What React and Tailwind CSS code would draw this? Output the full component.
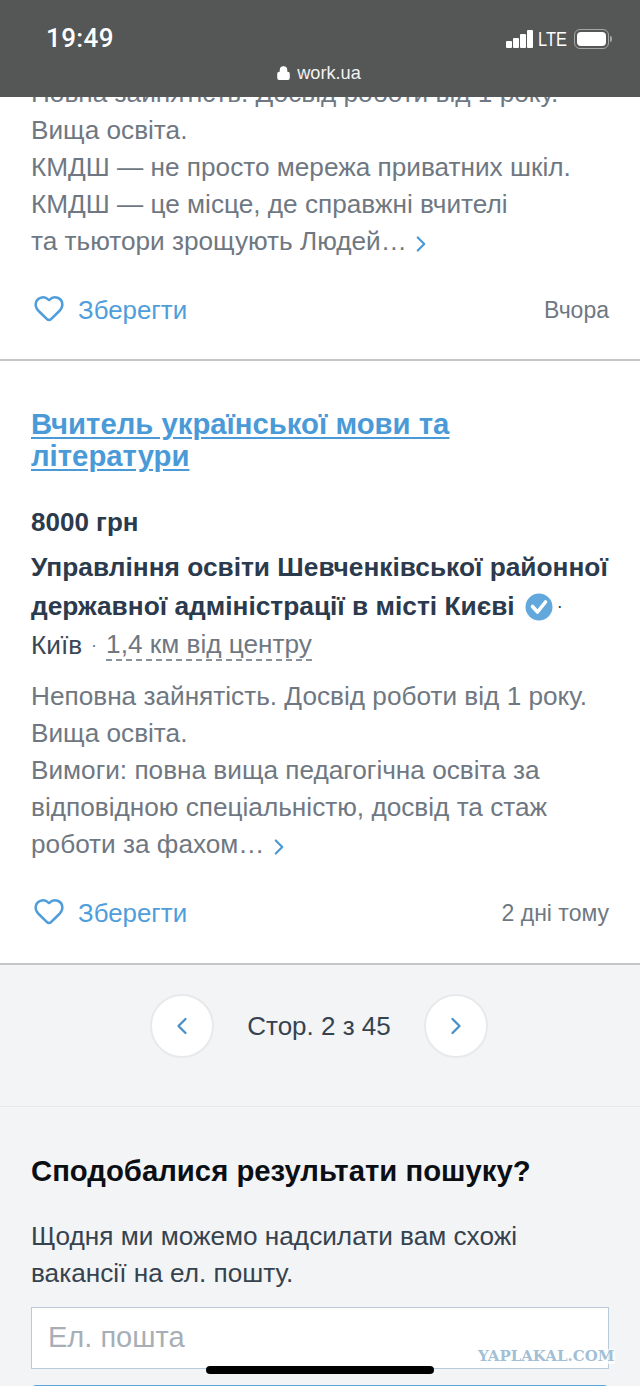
import { Lock, Heart, ChevronLeft, ChevronRight } from 'lucide-react';

const FONT = "font-['Liberation_Sans',Arial,sans-serif]";

const More = () => (
  <ChevronRight className="inline-block w-[26px] h-[26px] ml-[1px] -my-[4px] text-[#4a9ad8] align-[-3px]" strokeWidth={2} />
);

const SaveRow = ({ when }) => (
  <div className="flex items-center justify-between h-[40px]">
    <div className="flex items-center gap-[13px] ml-[2px]">
      <Heart className="w-[32px] h-[32px] text-[#4f9edb] -mt-[4px]" strokeWidth={1.9} />
      <span className="text-[25.9px] text-[#4f9edb]">Зберегти</span>
    </div>
    <span className="text-[23px] text-[#6f7882]">{when}</span>
  </div>
);

const Desc = ({ lines }) => (
  <div className="text-[26.2px] leading-[37px] text-[#6f7882]">
    {lines.map((l, i) => (
      <div key={i} className="whitespace-nowrap">
        {l}
        {i === lines.length - 1 && <More />}
      </div>
    ))}
  </div>
);

const StatusBar = () => (
  <header className="relative z-10 h-[97px] bg-[#555656] text-white">
    <div className="flex items-center justify-between pl-[46px] pr-[28px] pt-[23px] h-[54px]">
      <span className="font-['Roboto',sans-serif] text-[26px] font-medium tracking-[0.4px]">19:49</span>
      <div className="flex items-center">
        <div className="flex items-end gap-[1px] h-[18px]">
          <div className="w-[6px] h-[7px] rounded-[1px] bg-white" />
          <div className="w-[6px] h-[10px] rounded-[1px] bg-white" />
          <div className="w-[6px] h-[14px] rounded-[1px] bg-white" />
          <div className="w-[6px] h-[18px] rounded-[1px] bg-white" />
        </div>
        <span className="ml-[5px] w-[29px] text-[20px] leading-none scale-x-[0.82] origin-left">LTE</span>
        <div className="ml-[7px] w-[35px] h-[20px] rounded-[6px] border border-[#a5a6a6] p-[2px]">
          <div className="w-full h-full rounded-[4px] bg-white" />
        </div>
        <div className="ml-[1px] w-[2px] h-[6px] rounded-r-[2px] bg-[#a5a6a6]" />
      </div>
    </div>
    <div className="flex items-center justify-center gap-[6px] mt-[8px] pr-[3px]">
      <Lock className="w-[15px] h-[16px] text-white fill-white" strokeWidth={2} />
      <span className="text-[18.2px] leading-[22px] text-[#f2f2f2]">work.ua</span>
    </div>
  </header>
);

export default function App() {
  return (
    <div className={`${FONT} relative w-[640px] h-[1386px] overflow-hidden bg-white`}>
      <StatusBar />

      {/* top card, scrolled under the bar */}
      <section className="-mt-[22px] px-[31px] h-[286px] border-b-2 border-[#c4c6c8]">
        <Desc
          lines={[
            'Повна зайнятість. Досвід роботи від 1 року.',
            'Вища освіта.',
            'КМДШ — не просто мережа приватних шкіл.',
            'КМДШ — це місце, де справжні вчителі',
            'та тьютори зрощують Людей…',
          ]}
        />
        <div className="mt-[30px]">
          <SaveRow when="Вчора" />
        </div>
      </section>

      <section className="px-[31px] pt-[47px] h-[604px] border-b-2 border-[#c4c6c8]">
        <h2 className="text-[29.3px] leading-[32px] font-bold text-[#4a9ad8] underline underline-offset-[3px] whitespace-nowrap">
          Вчитель української мови та<br />літератури
        </h2>
        <div className="mt-[35px] text-[26px] leading-[30px] font-bold text-[#2b3a4c]">8000 грн</div>
        <div className="mt-[11px] text-[26.3px] leading-[39px] font-bold text-[#2b3a4c] whitespace-nowrap">
          <div>Управління освіти Шевченківської районної</div>
          <div className="flex items-center">
            державної адміністрації в місті Києві
            <svg viewBox="0 0 28 28" className="w-[28px] h-[28px] ml-[10px]">
              <circle cx="14" cy="14" r="13.5" fill="#62a8dc" />
              <path d="M7.5 13.5l5 5.5 8-10" fill="none" stroke="#fff" strokeWidth="3.6" strokeLinecap="round" strokeLinejoin="round" />
            </svg>
            <span className="ml-[4px] text-[18px] font-normal">·</span>
          </div>
        </div>
        <div className="flex items-center h-[37px] mt-[1px] text-[26.2px] whitespace-nowrap">
          <span className="text-[#3a4756]">Київ</span>
          <span className="mx-[9px] text-[#6f7882] text-[18px]">·</span>
          <span className="text-[#6f7882] leading-[29px] border-b-2 border-dashed border-[#8a929a]">1,4 км від центру</span>
        </div>
        <div className="mt-[14px]">
          <Desc
            lines={[
              'Неповна зайнятість. Досвід роботи від 1 року.',
              'Вища освіта.',
              'Вимоги: повна вища педагогічна освіта за',
              'відповідною спеціальністю, досвід та стаж',
              'роботи за фахом…',
            ]}
          />
        </div>
        <div className="mt-[30px]">
          <SaveRow when="2 дні тому" />
        </div>
      </section>

      <div className="bg-[#f3f4f6]">
        <nav className="flex items-center justify-center gap-[33px] h-[142px] pb-[19px] pr-[2px] border-b border-[#e6e8ea]">
          <button className="flex items-center justify-center w-[64px] h-[64px] rounded-full bg-white border-2 border-[#e8e9ea]">
            <ChevronLeft className="w-[28px] h-[28px] text-[#4a90c8]" strokeWidth={2} />
          </button>
          <span className="text-[26px] text-[#36434f] whitespace-nowrap">Стор. 2 з 45</span>
          <button className="flex items-center justify-center w-[64px] h-[64px] rounded-full bg-white border-2 border-[#e8e9ea]">
            <ChevronRight className="w-[28px] h-[28px] text-[#4a90c8]" strokeWidth={2} />
          </button>
        </nav>

        <div className="px-[31px] pt-[44px] h-[290px]">
          <h3 className="text-[29.3px] leading-[40px] font-bold text-[#0b0f14] whitespace-nowrap">Сподобалися результати пошуку?</h3>
          <p className="mt-[27px] text-[26.2px] leading-[37px] text-[#36434f] whitespace-nowrap">
            Щодня ми можемо надсилати вам схожі<br />вакансії на ел. пошту.
          </p>
          <div className="mt-[15px] flex items-center h-[62px] px-[16px] bg-white border border-[#b9cbdb] text-[29px] text-[#a8aeb5]">
            Ел. пошта
          </div>
          <div className="mt-[16px] h-[20px] rounded-t-[5px] bg-[#5aa5de]" />
        </div>
      </div>

      {/* home indicator */}
      <div className="absolute left-[206px] top-[1366px] w-[228px] h-[8px] rounded-full bg-black" />

      {/* image host watermark */}
      <div className="absolute left-[477px] top-[1349px] px-[1px] bg-white/70 text-[15px] leading-[15px] font-['DejaVu_Serif',serif] font-bold text-[#a3bfd6] whitespace-nowrap">
        YAPLAKAL.COM
      </div>
    </div>
  );
}
